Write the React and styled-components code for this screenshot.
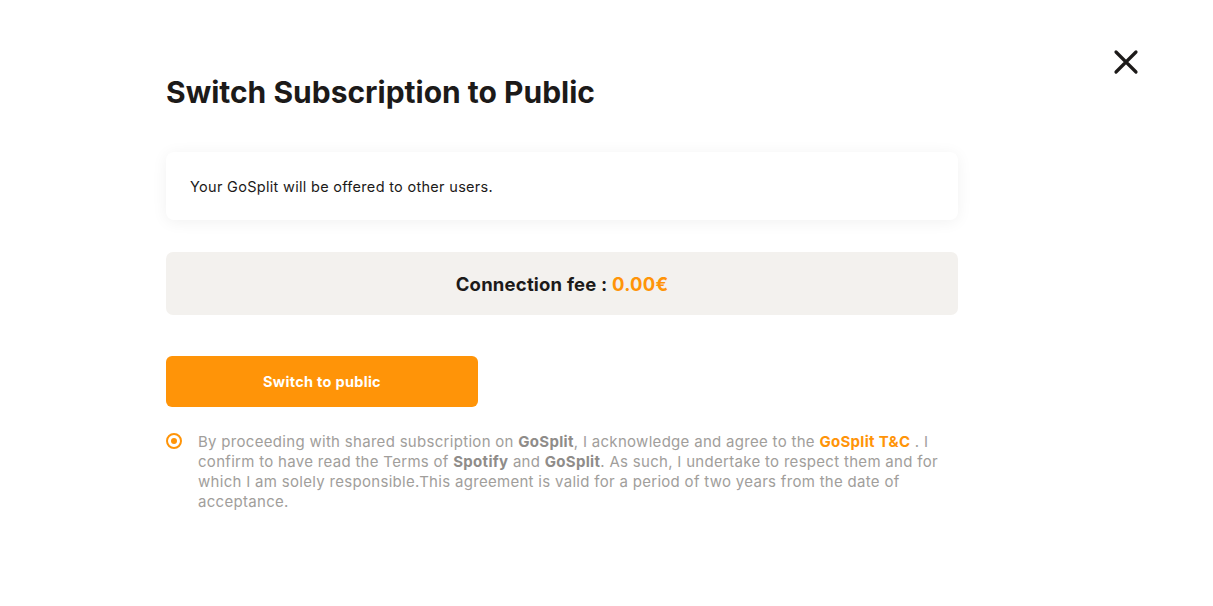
import React, { useState } from 'react';
import styled, { createGlobalStyle } from 'styled-components';

const GlobalStyle = createGlobalStyle`
   body {
      margin: 0;
      background: #fff;
      font-family: 'Inter', 'Lato', sans-serif;
      color: #1c1a19;
   }
`;

const Page = styled.div`
   position: relative;
   width: 1213px;
   height: 606px;
   box-sizing: border-box;
   padding: 72px 0 0 166px;
`;

const Close = styled.button`
   position: absolute;
   top: 48px;
   right: 73px;
   width: 28px;
   height: 28px;
   padding: 0;
   border: none;
   background: none;
   cursor: pointer;
`;

const Column = styled.div`
   width: 792px;
   display: flex;
   flex-direction: column;
`;

const Title = styled.h1`
   margin: 0 0 40px;
   font-size: 30px;
   line-height: 40px;
   font-weight: 700;
`;

const Card = styled.div`
   height: 68px;
   display: flex;
   align-items: center;
   padding: 0 24px;
   border-radius: 8px;
   background: #fff;
   box-shadow: 0 2px 16px rgba(0, 0, 0, 0.06);
   font-size: 14.5px;
   letter-spacing: 0.3px;
`;

const Fee = styled.div`
   margin-top: 32px;
   height: 63px;
   display: flex;
   align-items: center;
   justify-content: center;
   border-radius: 7px;
   background: #f3f1ee;
   font-size: 18.5px;
   letter-spacing: 0.2px;
   font-weight: 700;
`;

const Accent = styled.span`
   color: #ff9408;
   font-weight: 700;
`;

const Button = styled.button`
   margin-top: 41px;
   width: 312px;
   height: 51px;
   border: none;
   border-radius: 6px;
   background: #ff9408;
   color: #fff;
   font-family: inherit;
   font-size: 14.5px;
   letter-spacing: 0.3px;
   font-weight: 700;
   cursor: pointer;
`;

const Terms = styled.label`
   margin-top: 25px;
   display: flex;
   gap: 16px;
   align-items: flex-start;
   cursor: pointer;
`;

const Radio = styled.span`
   flex: none;
   margin: 1px 0 0 0;
   width: 12px;
   height: 12px;
   border: 2px solid #ff9408;
   border-radius: 50%;
   display: flex;
   align-items: center;
   justify-content: center;

   &::after {
      content: '';
      width: 6px;
      height: 6px;
      border-radius: 50%;
      background: ${({ checked }) => (checked ? '#ff9408' : 'transparent')};
   }
`;

const TermsText = styled.p`
   margin: 0;
   max-width: 745px;
   font-size: 15px;
   letter-spacing: 0.3px;
   line-height: 20px;
   color: #a19e9b;
`;

const Strong = styled.b`
   color: #8f8c89;
   font-weight: 700;
`;

const CloseIcon = () => (
   <svg width='28' height='28' viewBox='0 0 28 28' fill='none'>
      <path
         d='M4 4L24 24M24 4L4 24'
         stroke='#1c1a19'
         strokeWidth='3.2'
         strokeLinecap='round'
      />
   </svg>
);

export default function App() {
   const [accepted, setAccepted] = useState(true);

   return (
      <>
         <GlobalStyle />
         <Page>
            <Close aria-label='Close'>
               <CloseIcon />
            </Close>
            <Column>
               <Title>Switch Subscription to Public</Title>
               <Card>Your GoSplit will be offered to other users.</Card>
               <Fee>
                  Connection fee :&nbsp;<Accent>0.00€</Accent>
               </Fee>
               <Button>Switch to public</Button>
               <Terms onClick={() => setAccepted(!accepted)}>
                  <Radio checked={accepted} />
                  <TermsText>
                     By proceeding with shared subscription on <Strong>GoSplit</Strong>, I
                     acknowledge and agree to the <Accent>GoSplit T&amp;C</Accent> . I
                     confirm to have read the Terms of <Strong>Spotify</Strong> and{' '}
                     <Strong>GoSplit</Strong>. As such, I undertake to respect them and
                     for which I am solely responsible.This agreement is valid for a
                     period of two years from the date of acceptance.
                  </TermsText>
               </Terms>
            </Column>
         </Page>
      </>
   );
}
